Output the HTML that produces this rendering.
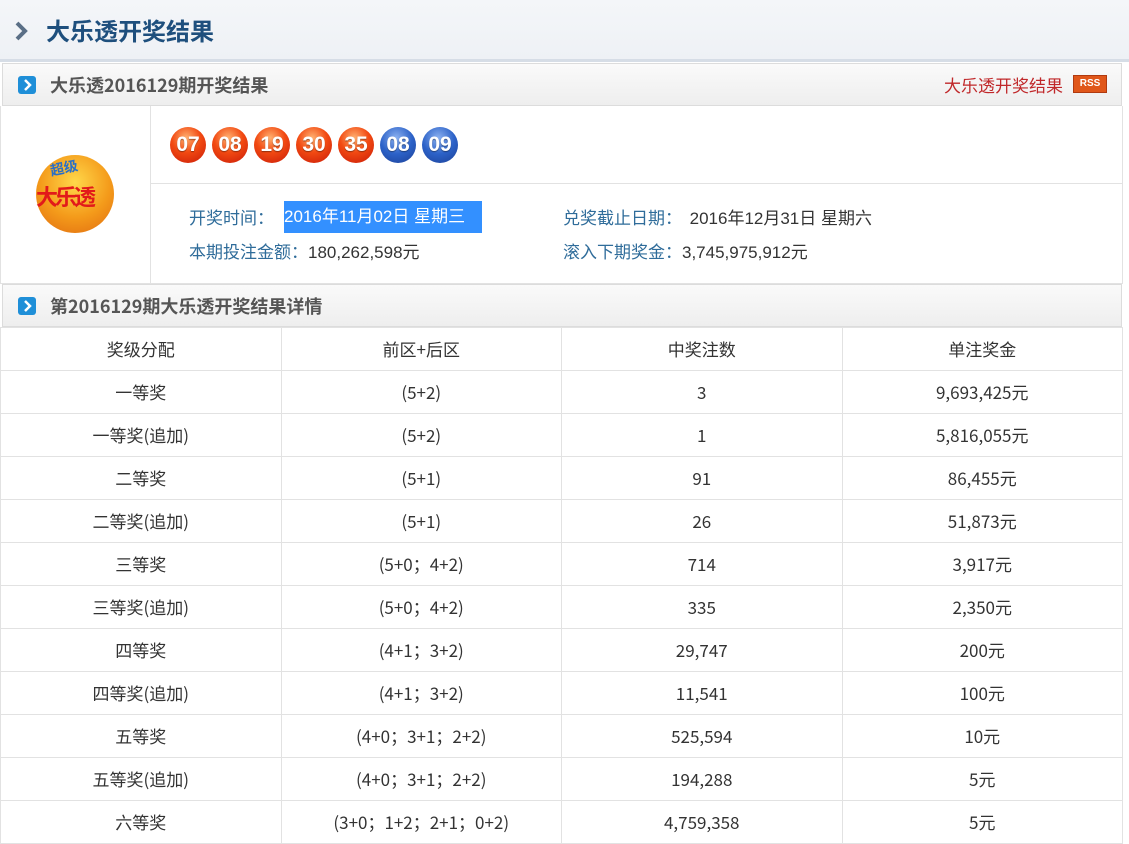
<!DOCTYPE html>
<html><head><meta charset="utf-8"><style>
*{margin:0;padding:0;box-sizing:border-box}
body{width:1129px;height:841px;overflow:hidden;background:#fff;font-family:"Liberation Sans","Noto Sans CJK SC",sans-serif;position:relative;color:#333}
.abs{position:absolute}
.top{left:0;top:0;width:1129px;height:62px;background:linear-gradient(#f4f6f9,#eef1f5);border-bottom:3px solid #d6dde6}
.top h1{position:absolute;left:46px;top:14px;font-size:24px;line-height:32px;color:#1e4f7d;font-weight:bold;font-family:"Noto Sans CJK SC",sans-serif}
.bar{left:2px;width:1120px;height:43px;background:linear-gradient(#fafafa,#eeeeee);border:1px solid #dcdcdc}
.bar .ic{position:absolute;left:15px;top:12px;width:18px;height:18px;background:#1f8fd8;border-radius:3px}
.bar .t{position:absolute;left:47px;top:8px;line-height:26px;font-size:18px;font-weight:bold;color:#555;font-family:"Noto Sans CJK SC",sans-serif}
.ball{width:36px;height:36px;border-radius:50%;color:#fff;font-weight:bold;font-size:21px;text-align:center;line-height:36px;top:127px;text-shadow:0 1px 1px rgba(0,0,0,.4)}
.r{background:radial-gradient(circle at 45% 30%,#ffb070 0,#f24a12 45%,#c81a08 100%)}
.b{background:radial-gradient(circle at 45% 30%,#8ab0f0 0,#2c62c8 50%,#1c3f95 100%)}
.lab{color:#2f6c9a;font-size:17px;line-height:24px;font-family:"Noto Sans CJK SC",sans-serif}
.val{color:#333;font-size:17px;font-family:"Liberation Sans","Noto Sans CJK SC",sans-serif}
table{position:absolute;left:0;top:327px;border-collapse:collapse;width:1123px;table-layout:fixed}
td{border:1px solid #e2e2e2;height:43px;padding:0;line-height:42px;text-align:center;font-size:17px;color:#333;font-family:"Noto Sans CJK SC",sans-serif;vertical-align:middle}
</style></head><body>
<div class="abs top"><svg class="abs" style="left:14px;top:20px" width="16" height="22" viewBox="0 0 16 22"><path d="M3 3 L11 11 L3 19" fill="none" stroke="#5a6f86" stroke-width="4"/></svg><h1>大乐透开奖结果</h1></div>
<div class="abs bar" style="top:63px"><div class="ic"><svg width="18" height="18"><path d="M7 4 L12 9 L7 14" fill="none" stroke="#fff" stroke-width="2.5"/></svg></div><div class="t">大乐透2016129期开奖结果</div>
<div class="abs lab" style="right:58px;top:9px;color:#c0282a">大乐透开奖结果</div>
<div class="abs" style="right:14px;top:11px;width:34px;height:18px;background:#e0571a;border:1px solid #b03a10;color:#fff;font-size:10px;font-weight:bold;text-align:center;line-height:16px">RSS</div></div>
<div class="abs" style="left:0;top:106px;width:1123px;height:178px;border:1px solid #e2e2e2;border-top:none"></div>
<div class="abs" style="left:150px;top:106px;width:1px;height:178px;background:#e2e2e2"></div>
<div class="abs" style="left:151px;top:183px;width:972px;height:1px;background:#e2e2e2"></div>
<div class="abs" style="left:36px;top:155px;width:78px;height:78px;border-radius:50%;background:radial-gradient(circle at 50% 35%,#ffd84a 0,#f49a1a 55%,#e06a10 100%)"></div>
<div class="abs" style="left:50px;top:158px;font-size:14px;color:#2a6fc8;font-weight:bold;transform:rotate(-12deg)">超级</div>
<div class="abs" style="left:36px;top:180px;font-size:22px;color:#e21a1a;font-weight:bold;letter-spacing:-3px">大乐透</div>
<div class="abs ball r" style="left:170px">07</div>
<div class="abs ball r" style="left:212px">08</div>
<div class="abs ball r" style="left:254px">19</div>
<div class="abs ball r" style="left:296px">30</div>
<div class="abs ball r" style="left:338px">35</div>
<div class="abs ball b" style="left:380px">08</div>
<div class="abs ball b" style="left:422px">09</div>
<div class="abs lab" style="left:189px;top:205px">开奖时间：</div>
<div class="abs val" style="left:284px;top:201px;background:#3390ff;color:#fff;height:32px;line-height:32px;width:198px;font-size:17px">2016年11月02日 星期三</div>
<div class="abs lab" style="left:189px;top:239px">本期投注金额：<span class="val">180,262,598元</span></div>
<div class="abs lab" style="left:563px;top:205px">兑奖截止日期：&nbsp; <span class="val">2016年12月31日 星期六</span></div>
<div class="abs lab" style="left:563px;top:239px">滚入下期奖金：<span class="val">3,745,975,912元</span></div>
<div class="abs bar" style="top:284px"><div class="ic"><svg width="18" height="18"><path d="M7 4 L12 9 L7 14" fill="none" stroke="#fff" stroke-width="2.5"/></svg></div><div class="t">第2016129期大乐透开奖结果详情</div></div>
<table>
<tr><td>奖级分配</td><td>前区+后区</td><td>中奖注数</td><td>单注奖金</td></tr>
<tr><td>一等奖</td><td>(5+2)</td><td>3</td><td>9,693,425元</td></tr>
<tr><td>一等奖(追加)</td><td>(5+2)</td><td>1</td><td>5,816,055元</td></tr>
<tr><td>二等奖</td><td>(5+1)</td><td>91</td><td>86,455元</td></tr>
<tr><td>二等奖(追加)</td><td>(5+1)</td><td>26</td><td>51,873元</td></tr>
<tr><td>三等奖</td><td>(5+0；4+2)</td><td>714</td><td>3,917元</td></tr>
<tr><td>三等奖(追加)</td><td>(5+0；4+2)</td><td>335</td><td>2,350元</td></tr>
<tr><td>四等奖</td><td>(4+1；3+2)</td><td>29,747</td><td>200元</td></tr>
<tr><td>四等奖(追加)</td><td>(4+1；3+2)</td><td>11,541</td><td>100元</td></tr>
<tr><td>五等奖</td><td>(4+0；3+1；2+2)</td><td>525,594</td><td>10元</td></tr>
<tr><td>五等奖(追加)</td><td>(4+0；3+1；2+2)</td><td>194,288</td><td>5元</td></tr>
<tr><td>六等奖</td><td>(3+0；1+2；2+1；0+2)</td><td>4,759,358</td><td>5元</td></tr>
</table>
</body></html>
